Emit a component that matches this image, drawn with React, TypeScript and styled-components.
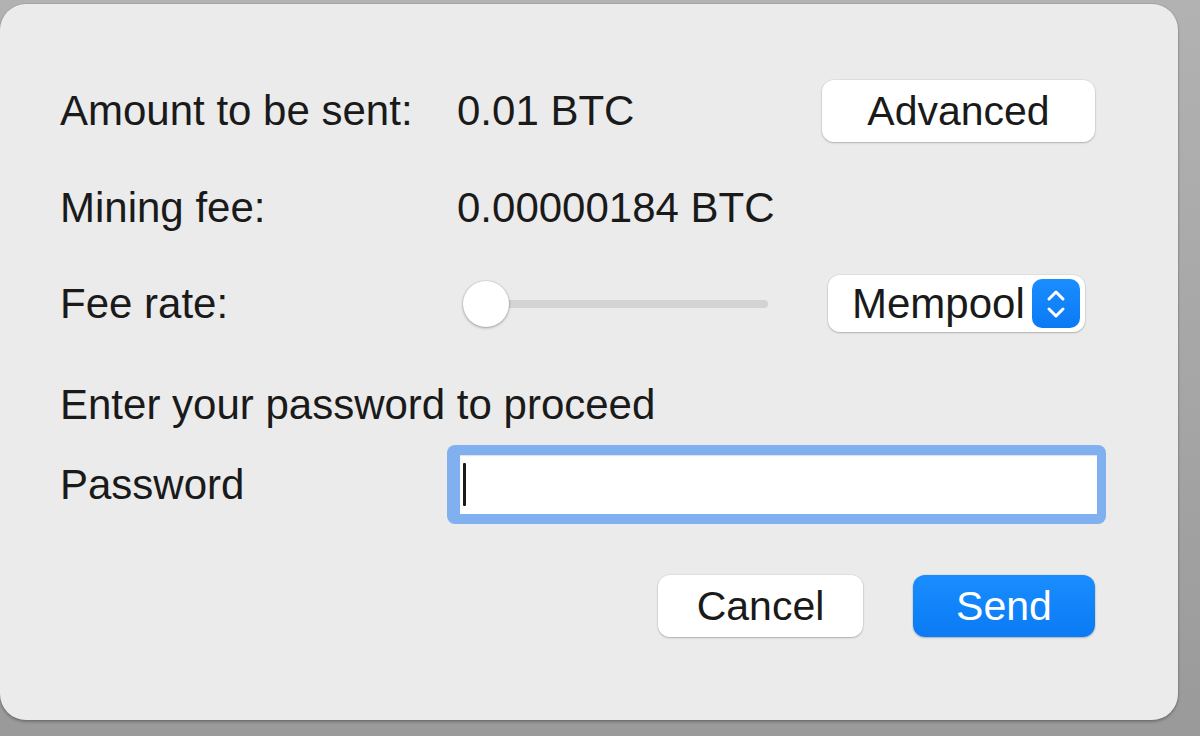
import React from "react";
import styled, { createGlobalStyle } from "styled-components";

const GlobalStyle = createGlobalStyle`
  html, body {
    margin: 0;
    padding: 0;
    width: 1200px;
    height: 736px;
    overflow: hidden;
  }
  body {
    background: linear-gradient(180deg, #b2b2b2 0%, #a4a4a4 60%, #9a9a9a 100%);
    font-family: "Liberation Sans", Arial, sans-serif;
  }
`;

const Screen = styled.div`
  width: 1200px;
  height: 736px;
  padding-top: 4px;
  box-sizing: border-box;
`;

const Panel = styled.div`
  width: 1178px;
  height: 716px;
  box-sizing: border-box;
  background: #ebebeb;
  border-radius: 26px;
  box-shadow: 0 2px 3px rgba(0, 0, 0, 0.25), 0 0 0 1px rgba(0, 0, 0, 0.06);
  padding: 76px 83px 0 60px;
  display: flex;
  flex-direction: column;
  color: #1a1a1a;
  font-size: 42px;
`;

const Row = styled.div<{ $h: number; $mt: number }>`
  display: flex;
  align-items: center;
  height: ${(p) => p.$h}px;
  margin-top: ${(p) => p.$mt}px;
`;

const Label = styled.div<{ $w?: number }>`
  width: ${(p) => p.$w ?? 397}px;
  flex: none;
  white-space: nowrap;
`;

const Value = styled.div`
  flex: 1;
  white-space: nowrap;
`;

const Heading = styled.div`
  white-space: nowrap;
`;

const Button = styled.button<{ $w: number; $primary?: boolean }>`
  width: ${(p) => p.$w}px;
  height: 62px;
  flex: none;
  border: none;
  border-radius: 12px;
  font-family: inherit;
  font-size: 41px;
  padding: 0;
  color: ${(p) => (p.$primary ? "#ffffff" : "#1a1a1a")};
  background: ${(p) =>
    p.$primary ? "linear-gradient(180deg, #1a8dff 0%, #0a7bf4 100%)" : "#ffffff"};
  box-shadow: 0 1px 2px rgba(0, 0, 0, 0.22), 0 0 0 1px rgba(0, 0, 0, 0.04);
`;

const SliderWrap = styled.div`
  width: 305px;
  height: 48px;
  margin-left: 6px;
  position: relative;
  display: flex;
  align-items: center;
`;

const Track = styled.div`
  width: 100%;
  height: 8px;
  border-radius: 4px;
  background: #d3d3d3;
`;

const Knob = styled.div`
  position: absolute;
  left: 0;
  top: 1px;
  width: 46px;
  height: 46px;
  border-radius: 50%;
  background: #ffffff;
  box-shadow: 0 1px 3px rgba(0, 0, 0, 0.3), 0 0 0 1px rgba(0, 0, 0, 0.05);
`;

const Spacer = styled.div`
  flex: 1;
`;

const Select = styled.div`
  width: 257px;
  height: 57px;
  margin-right: 10px;
  box-sizing: border-box;
  background: #ffffff;
  border-radius: 12px;
  box-shadow: 0 1px 2px rgba(0, 0, 0, 0.22), 0 0 0 1px rgba(0, 0, 0, 0.04);
  display: flex;
  align-items: center;
  padding: 0 5px 0 24px;
  justify-content: space-between;
`;

const Stepper = styled.div`
  width: 48px;
  height: 49px;
  border-radius: 10px;
  background: linear-gradient(180deg, #1a8dff 0%, #0a7af3 100%);
  display: flex;
  align-items: center;
  justify-content: center;
`;

const FocusRing = styled.div`
  width: 659px;
  height: 79px;
  margin-right: -11px;
  box-sizing: border-box;
  border-radius: 8px;
  background: #80b0f0;
  padding: 10px 9px 10px 13px;
  display: flex;
`;

const Field = styled.div`
  flex: 1;
  background: #ffffff;
  box-shadow: inset 0 1px 1px rgba(0, 0, 0, 0.12);
  display: flex;
  align-items: center;
  padding-left: 3px;
`;

const Caret = styled.div`
  width: 3px;
  height: 43px;
  background: #1a1a1a;
  border-radius: 1px;
`;

const Actions = styled.div`
  display: flex;
  justify-content: flex-end;
  gap: 50px;
  margin-top: 51px;
`;

const App = () => {
  return (
    <>
      <GlobalStyle />
      <Screen>
        <Panel>
          <Row $h={62} $mt={0}>
            <Label>Amount to be sent:</Label>
            <Value>0.01 BTC</Value>
            <Button $w={273}>Advanced</Button>
          </Row>
          <Row $h={56} $mt={38}>
            <Label>Mining fee:</Label>
            <Value>0.00000184 BTC</Value>
          </Row>
          <Row $h={57} $mt={39}>
            <Label>Fee rate:</Label>
            <SliderWrap>
              <Track />
              <Knob />
            </SliderWrap>
            <Spacer />
            <Select>
              <span>Mempool</span>
              <Stepper>
                <svg width="22" height="36" viewBox="0 0 22 36" fill="none">
                  <path
                    d="M4 13 L11 6 L18 13"
                    stroke="#fff"
                    strokeWidth="3"
                    strokeLinecap="round"
                    strokeLinejoin="round"
                  />
                  <path
                    d="M4 23 L11 30 L18 23"
                    stroke="#fff"
                    strokeWidth="3"
                    strokeLinecap="round"
                    strokeLinejoin="round"
                  />
                </svg>
              </Stepper>
            </Select>
          </Row>
          <Row $h={50} $mt={48}>
            <Heading>Enter your password to proceed</Heading>
          </Row>
          <Row $h={79} $mt={15}>
            <Label $w={387}>Password</Label>
            <FocusRing>
              <Field>
                <Caret />
              </Field>
            </FocusRing>
          </Row>
          <Actions>
            <Button $w={205}>Cancel</Button>
            <Button $w={182} $primary>
              Send
            </Button>
          </Actions>
        </Panel>
      </Screen>
    </>
  );
};

export default App;
